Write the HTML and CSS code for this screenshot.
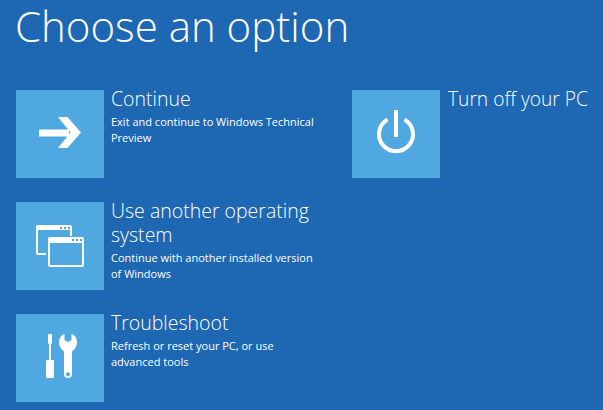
FILE: index.html
```html
<!DOCTYPE html>
<html lang="en">
<head>
  <meta charset="UTF-8" />
  <title>Choose an option</title>
  <link rel="stylesheet" href="styles.css">
</head>
<body>

  <h1 class="title">Choose an option</h1>

  <div class="options">
    <div class="column">
      <div class="option">
        <div class="tile">
          <svg width="88" height="88" viewBox="0 0 88 88" fill="#fff">
            <path d="M23 39.500h30v7H23z"/>
            <path d="M42 27h9.500L65 42.500 51.500 58H42l12.500-15.500z"/>
          </svg>
        </div>
        <div class="text">
          <h2>Continue</h2>
          <p>Exit and continue to Windows Technical Preview</p>
        </div>
      </div>

      <div class="option">
        <div class="tile">
          <svg width="88" height="88" viewBox="0 0 88 88">
            <path d="M30 52h-8a1 1 0 0 1-1-1V27M55 27v7" fill="none" stroke="#fff" stroke-width="2"/>
            <path d="M22 23h32a2 2 0 0 1 2 2v3H20v-3a2 2 0 0 1 2-2z" fill="#fff"/>
            <path d="M44 25h2v2h-2zM48 25h2v2h-2zM52 25h2v2h-2z" fill="#4fa8e0"/>
            <path d="M33 40v23a1 1 0 0 0 1 1h32a1 1 0 0 0 1-1V40" fill="none" stroke="#fff" stroke-width="2"/>
            <path d="M34 35h32a2 2 0 0 1 2 2v4H32v-4a2 2 0 0 1 2-2z" fill="#fff"/>
            <path d="M56 37h2v2h-2zM60 37h2v2h-2zM64 37h2v2h-2z" fill="#4fa8e0"/>
          </svg>
        </div>
        <div class="text">
          <h2>Use another operating system</h2>
          <p>Continue with another installed version of Windows</p>
        </div>
      </div>

      <div class="option">
        <div class="tile">
          <svg width="88" height="88" viewBox="0 0 88 88" fill="#fff">
            <path d="M32 20h4v9l-1 1v16h-2V30l-1-1z"/>
            <rect x="30" y="46" width="8" height="18" rx="1"/>
            <path fill-rule="evenodd" d="M48.500 20C45 21 43 24.500 43 28.500c0 3.500 2 7 5 9V60a4 4 0 0 0 8 0V37.500c3-2 5-5.500 5-9 0-4-2-7.500-5.500-8.500v6L52 28l-3.500-2zM52 58.300a2 2 0 1 0 .01 0z"/>
          </svg>
        </div>
        <div class="text">
          <h2>Troubleshoot</h2>
          <p>Refresh or reset your PC, or use advanced tools</p>
        </div>
      </div>
    </div>

    <div class="column">
      <div class="option">
        <div class="tile">
          <svg width="88" height="88" viewBox="0 0 88 88" fill="none" stroke="#fff" stroke-width="4">
            <path d="M44 20v27"/>
            <path d="M35.500 29.500a17 17 0 1 0 17 0"/>
          </svg>
        </div>
        <div class="text">
          <h2 class="side-heading">Turn off your PC</h2>
        </div>
      </div>
    </div>
  </div>

</body>
</html>
```

FILE: styles.css
```css
body {
  margin: 0;
  height: 410px;
  overflow: hidden;
  background-color: #1e67b3;
  color: #fff;
  font-family: 'Open Sans', sans-serif;
}

.title {
  margin: 0;
  padding-left: 15px;
  height: 90px;
  font-size: 42px;
  font-weight: 300;
  line-height: 52px;
}

.options {
  display: flex;
  padding-left: 16px;
}

.column {
  flex: none;
  display: flex;
  flex-direction: column;
  gap: 24px;
  width: 336px;
}

.column + .column {
  width: 235px;
}

.option {
  display: flex;
  gap: 7px;
}

.tile {
  flex: none;
  width: 88px;
  height: 88px;
  background-color: #4fa8e0;
}

.tile svg {
  display: block;
}

.text {
  width: 208px;
  margin-top: -3px;
}

.text h2 {
  margin: 0;
  font-size: 19.5px;
  font-weight: 300;
  line-height: 24px;
}

.text .side-heading {
  margin-left: 1px;
  font-size: 19.2px;
  white-space: nowrap;
}

.text p {
  margin: 3px 0 0;
  font-size: 11px;
  line-height: 16px;
}
```
